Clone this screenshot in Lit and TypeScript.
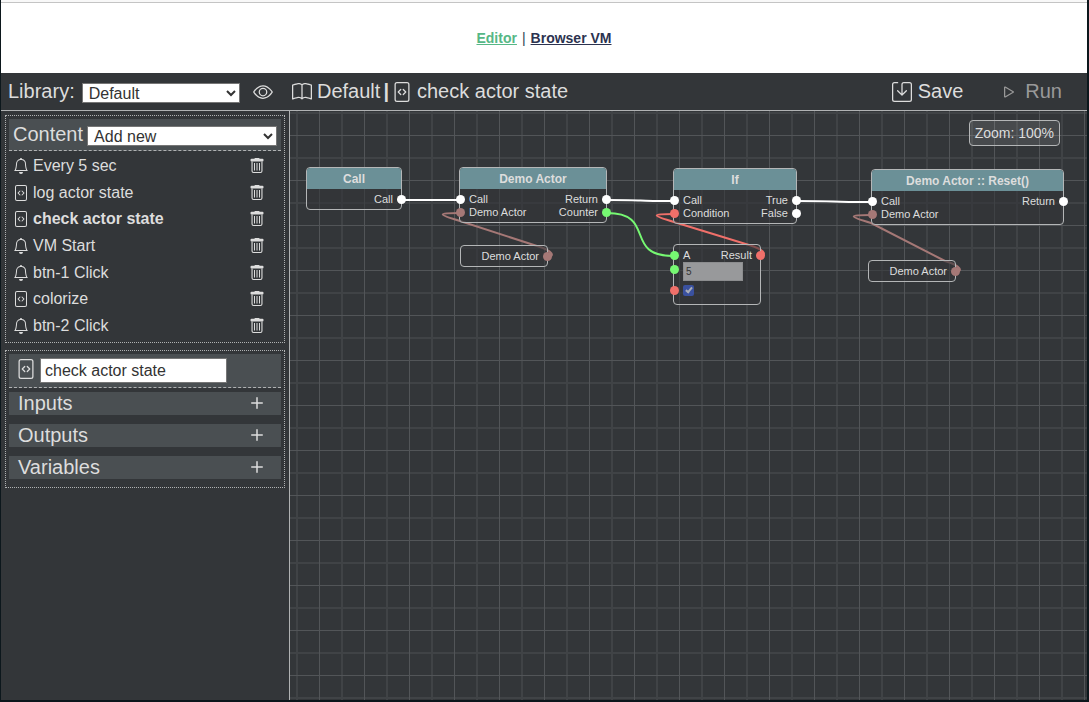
import { LitElement, html, css, svg } from "lit";
import { customElement, property, state } from "lit/decorators.js";
import { classMap } from "lit/directives/class-map.js";

const ICONS: Record<string, string[]> = {
  eye: [
    "M16 8s-3-5.5-8-5.5S0 8 0 8s3 5.5 8 5.5S16 8 16 8zM1.173 8a13.133 13.133 0 0 1 1.66-2.043C4.12 4.668 5.88 3.5 8 3.5c2.12 0 3.879 1.168 5.168 2.457A13.133 13.133 0 0 1 14.828 8c-.058.087-.122.183-.195.288-.335.48-.83 1.12-1.465 1.755C11.879 11.332 10.119 12.5 8 12.5c-2.12 0-3.879-1.168-5.168-2.457A13.134 13.134 0 0 1 1.172 8z",
    "M8 5.5a2.5 2.5 0 1 0 0 5 2.5 2.5 0 0 0 0-5zM4.5 8a3.5 3.5 0 1 1 7 0 3.5 3.5 0 0 1-7 0z",
  ],
  bell: [
    "M8 16a2 2 0 0 0 2-2H6a2 2 0 0 0 2 2zM8 1.918l-.797.161A4.002 4.002 0 0 0 4 6c0 .628-.134 2.197-.459 3.742-.16.767-.376 1.566-.663 2.258h10.244c-.287-.692-.502-1.49-.663-2.258C12.134 8.197 12 6.628 12 6a4.002 4.002 0 0 0-3.203-3.92L8 1.917zM14.22 12c.223.447.481.801.78 1H1c.299-.199.557-.553.78-1C2.68 10.2 3 6.88 3 6c0-2.42 1.72-4.44 4.005-4.901a1 1 0 1 1 1.99 0A5.002 5.002 0 0 1 13 6c0 .88.32 4.2 1.22 6z",
  ],
  code: [
    "M6.646 5.646a.5.5 0 1 1 .708.708L5.707 8l1.647 1.646a.5.5 0 0 1-.708.708l-2-2a.5.5 0 0 1 0-.708l2-2zm2.708 0a.5.5 0 1 0-.708.708L10.293 8 8.646 9.646a.5.5 0 0 0 .708.708l2-2a.5.5 0 0 0 0-.708l-2-2z",
    "M2 2a2 2 0 0 1 2-2h8a2 2 0 0 1 2 2v12a2 2 0 0 1-2 2H4a2 2 0 0 1-2-2V2zm10-1H4a1 1 0 0 0-1 1v12a1 1 0 0 0 1 1h8a1 1 0 0 0 1-1V2a1 1 0 0 0-1-1z",
  ],
  book: [
    "M1 2.828c.885-.37 2.154-.769 3.388-.893 1.33-.134 2.458.063 3.112.752v9.746c-.935-.53-2.12-.603-3.213-.493-1.18.12-2.37.461-3.287.811V2.828zm7.5-.141c.654-.689 1.782-.886 3.112-.752 1.234.124 2.503.523 3.388.893v9.923c-.918-.35-2.107-.692-3.287-.81-1.094-.111-2.278-.039-3.213.492V2.687zM8 1.783C7.015.936 5.587.81 4.287.94c-1.514.153-3.042.672-3.994 1.105A.5.5 0 0 0 0 2.5v11a.5.5 0 0 0 .707.455c.882-.4 2.303-.881 3.68-1.02 1.409-.142 2.59.087 3.223.877a.5.5 0 0 0 .78 0c.633-.79 1.814-1.019 3.222-.877 1.378.139 2.8.62 3.681 1.02A.5.5 0 0 0 16 13.5v-11a.5.5 0 0 0-.293-.455c-.952-.433-2.48-.952-3.994-1.105C10.413.809 8.985.936 8 1.783z",
  ],
  save: [
    "M2 1a1 1 0 0 0-1 1v12a1 1 0 0 0 1 1h12a1 1 0 0 0 1-1V2a1 1 0 0 0-1-1H9.5a1 1 0 0 0-1 1v7.293l2.646-2.647a.5.5 0 0 1 .708.708l-3.5 3.5a.5.5 0 0 1-.708 0l-3.5-3.5a.5.5 0 1 1 .708-.708L7.5 9.293V2a2 2 0 0 1 2-2H14a2 2 0 0 1 2 2v12a2 2 0 0 1-2 2H2a2 2 0 0 1-2-2V2a2 2 0 0 1 2-2h2.5a.5.5 0 0 1 0 1H2z",
  ],
  play: [
    "M10.804 8 5 4.633v6.734L10.804 8zm.792-.696a.802.802 0 0 1 0 1.392l-6.363 3.692C4.713 12.69 4 12.345 4 11.692V4.308c0-.653.713-.998 1.233-.696l6.363 3.692z",
  ],
  plus: [
    "M8 4a.5.5 0 0 1 .5.5v3h3a.5.5 0 0 1 0 1h-3v3a.5.5 0 0 1-1 0v-3h-3a.5.5 0 0 1 0-1h3v-3A.5.5 0 0 1 8 4z",
  ],
  trash: [
    "M5.5 .8V.5A.5.5 0 0 1 6 0h4a.5.5 0 0 1 .5.5V.8H13.500a1 1 0 0 1 1 1v.7a1 1 0 0 1-1 1H2.500a1 1 0 0 1-1-1V1.800a1 1 0 0 1 1-1z",
    "M2.500 3.500h11V13a2 2 0 0 1-2 2H4.500a2 2 0 0 1-2-2zM3.600 3.500V13a1 1 0 0 0 1 1h6.800a1 1 0 0 0 1-1V3.500z",
    "M5 5h1v7.500h-1zM7.500 5h1v7.500h-1zM10 5h1v7.500h-1z",
  ],
};

@customElement("ui-icon")
class UiIcon extends LitElement {
  @property() name = "code";
  static styles = css`
    :host {
      display: inline-flex;
      width: 1em;
      height: 1em;
      flex: none;
    }
    svg {
      width: 100%;
      height: 100%;
      fill: currentColor;
    }
  `;
  render() {
    return html`<svg viewBox="0 0 16 16" aria-hidden="true">
      ${ICONS[this.name].map((d) => svg`<path fill-rule="evenodd" d=${d}></path>`)}
    </svg>`;
  }
}

type Kind = "exec" | "actor" | "number" | "bool";
interface Port {
  kind: Kind;
  label?: string;
  control?: "text" | "check";
}
interface GraphNode {
  x: number;
  y: number;
  width: number;
  title?: string;
  inputs: Port[];
  outputs: Port[];
}

const NODES: GraphNode[] = [
  { x: 16, y: 56, width: 96, title: "Call", inputs: [], outputs: [{ kind: "exec", label: "Call" }] },
  {
    x: 169, y: 56, width: 148, title: "Demo Actor",
    inputs: [{ kind: "exec", label: "Call" }, { kind: "actor", label: "Demo Actor" }],
    outputs: [{ kind: "exec", label: "Return" }, { kind: "number", label: "Counter" }],
  },
  {
    x: 383, y: 57, width: 124, title: "If",
    inputs: [{ kind: "exec", label: "Call" }, { kind: "bool", label: "Condition" }],
    outputs: [{ kind: "exec", label: "True" }, { kind: "exec", label: "False" }],
  },
  {
    x: 581, y: 58, width: 193, title: "Demo Actor :: Reset()",
    inputs: [{ kind: "exec", label: "Call" }, { kind: "actor", label: "Demo Actor" }],
    outputs: [{ kind: "exec", label: "Return" }],
  },
  { x: 170, y: 134, width: 88, inputs: [], outputs: [{ kind: "actor", label: "Demo Actor" }] },
  { x: 578, y: 149, width: 88, inputs: [], outputs: [{ kind: "actor", label: "Demo Actor" }] },
  {
    x: 383, y: 133, width: 88,
    inputs: [
      { kind: "number", label: "A" },
      { kind: "number", control: "text" },
      { kind: "bool", control: "check" },
    ],
    outputs: [{ kind: "bool", label: "Result" }],
  },
];

interface Wire {
  kind: Kind;
  from: [number, number];
  to: [number, number];
}

const WIRES: Wire[] = [
  { kind: "exec", from: [111, 89], to: [170, 89] },
  { kind: "exec", from: [317, 89], to: [384, 90] },
  { kind: "exec", from: [506, 90], to: [581, 91] },
  { kind: "number", from: [317, 102], to: [383, 145] },
  { kind: "actor", from: [257, 146], to: [170, 102] },
  { kind: "bool", from: [469, 145], to: [384, 103] },
  { kind: "actor", from: [665, 161], to: [581, 104] },
];

/* Forward wires are plain curves; backward ones loop around both ends. */
function wirePath({ from: [sx, sy], to: [ex, ey] }: Wire): string {
  if (ex < sx) {
    return `M${sx} ${sy}C${sx + 8} ${sy} ${sx + 7} ${sy - 6} ${sx - 10} ${sy - 11}L${ex} ${ey + 8}C${ex - 24} ${ey + 1} ${ex - 22} ${ey} ${ex} ${ey}`;
  }
  return `M${sx} ${sy}C${sx + 50} ${sy} ${ex - 50} ${ey} ${ex} ${ey}`;
}

@customElement("graph-canvas")
class GraphCanvas extends LitElement {
  static styles = css`
    :host {
      display: block;
      position: relative;
      overflow: hidden;
      font-size: 11px;
      background-color: #333639;
      background-image: linear-gradient(90deg, #525558 1px, transparent 1px),
        linear-gradient(#525558 1px, transparent 1px),
        linear-gradient(90deg, #404346 2px, transparent 2px),
        linear-gradient(#404346 2px, transparent 2px);
      background-size: 45px 45px;
      background-position: 29px 0, 0 24px, 6px 0, 0 1px;
    }
    .wires {
      position: absolute;
      inset: 0;
      width: 100%;
      height: 100%;
      fill: none;
      stroke-width: 2;
    }
    .wire.exec { stroke: #fff; }
    .wire.actor { stroke: #a57876; }
    .wire.number { stroke: #76f872; }
    .wire.bool { stroke: #f0706a; }
    .node {
      position: absolute;
      box-sizing: border-box;
      border: 1px solid #b4b6b7;
      border-radius: 4px;
      background: rgba(51, 54, 57, 0.6);
    }
    .title {
      margin: 0;
      padding-top: 1px;
      border-radius: 3px 3px 0 0;
      background: #6b9097;
      font-size: 12px;
      line-height: 20px;
      text-align: center;
    }
    .ports {
      display: flex;
      justify-content: space-between;
      padding: 4px 0 3px;
    }
    .side {
      display: flex;
      flex-direction: column;
      min-width: 0;
      margin-left: -4px;
    }
    .side.out {
      flex: none;
      margin: 0 -5px 0 0;
    }
    .port {
      display: flex;
      align-items: center;
      gap: 4px;
      line-height: 13px;
    }
    .out .port {
      flex-direction: row-reverse;
    }
    .label {
      padding-bottom: 1px;
      line-height: 12px;
      white-space: nowrap;
    }
    .pin {
      width: 9px;
      height: 9px;
      border-radius: 50%;
      flex: none;
    }
    .pin.exec { background: #fff; }
    .pin.actor { background: #a57876; }
    .pin.number { background: #76f872; }
    .pin.bool { background: #f0706a; }
    .port.text,
    .port.check-row {
      align-items: flex-start;
    }
    .port.text .pin {
      margin-top: 3px;
    }
    .port.check-row .pin {
      margin-top: 1px;
    }
    .value {
      box-sizing: border-box;
      width: 60px;
      height: 19px;
      margin-bottom: 4px;
      padding: 0 2px;
      border: 1px solid #8c8d8f;
      background: #98999b;
      color: #333;
      font: 10px "Liberation Sans", Arial, sans-serif;
      flex: none;
    }
    .check {
      appearance: none;
      display: grid;
      width: 11px;
      height: 11px;
      margin: 0 0 5px;
      border-radius: 2px;
      background: #3a519f;
      flex: none;
    }
    .check:checked::before {
      content: "";
      width: 2px;
      height: 5px;
      margin: 1px 4px;
      border: solid #a9adb8;
      border-width: 0 2px 2px 0;
      rotate: 40deg;
    }
    .zoom {
      position: absolute;
      top: 9px;
      right: 27px;
      padding: 0 5px;
      border: 1px solid #b4b6b7;
      border-radius: 4px;
      background: rgba(255, 255, 255, 0.1);
      font-size: 14px;
      line-height: 24px;
    }
  `;

  private port(p: Port) {
    return html`<div class=${classMap({ port: true, text: p.control === "text", "check-row": p.control === "check" })}>
      <span class="pin ${p.kind}"></span>
      ${p.label ? html`<span class="label">${p.label}</span>` : ""}
      ${p.control === "text" ? html`<input class="value" type="text" aria-label="B" .value=${"5"} />` : ""}
      ${p.control === "check" ? html`<input class="check" type="checkbox" aria-label="Enabled" checked />` : ""}
    </div>`;
  }

  render() {
    return html`
      <svg class="wires" aria-hidden="true">
        ${WIRES.map((w) => svg`<path class="wire ${w.kind}" d=${wirePath(w)}></path>`)}
      </svg>
      ${NODES.map(
        (n) => html`<section class="node" style="left:${n.x}px;top:${n.y}px;width:${n.width}px">
          ${n.title ? html`<h3 class="title">${n.title}</h3>` : ""}
          <div class="ports">
            <div class="side">${n.inputs.map((p) => this.port(p))}</div>
            <div class="side out">${n.outputs.map((p) => this.port(p))}</div>
          </div>
        </section>`
      )}
      <div class="zoom">Zoom: 100%</div>
    `;
  }
}

@customElement("app-root")
class AppRoot extends LitElement {
  @state() private selected = "check actor state";

  private items = [
    { icon: "bell", name: "Every 5 sec" },
    { icon: "code", name: "log actor state" },
    { icon: "code", name: "check actor state" },
    { icon: "bell", name: "VM Start" },
    { icon: "bell", name: "btn-1 Click" },
    { icon: "code", name: "colorize" },
    { icon: "bell", name: "btn-2 Click" },
  ];

  static styles = css`
    :host {
      display: flex;
      flex-direction: column;
      box-sizing: border-box;
      min-height: 100vh;
      border: solid #0c171c;
      border-width: 0 2px 2px 1px;
      background: #333639;
      color: #ddd;
      font: 16px "Liberation Sans", Arial, sans-serif;
    }
    button {
      display: inline-flex;
      align-items: center;
      padding: 0;
      border: 0;
      background: none;
      color: inherit;
      font: inherit;
      cursor: pointer;
    }
    select {
      box-sizing: border-box;
      height: 20px;
      padding: 0 0 2px 2px;
      border: 1px solid #767676;
      border-radius: 0;
      background-color: #fff;
      color: #333;
      font: 16px "Liberation Sans", Arial, sans-serif;
    }
    .nav {
      border-top: 2px solid #f8f8f8;
      background: #fff;
      color: #2c3e50;
    }
    .links {
      display: flex;
      justify-content: center;
      gap: 5px;
      border-top: 1px solid #c4c4c4;
      font-size: 14px;
      line-height: 70px;
    }
    .link {
      color: #2c3350;
      font-weight: bold;
    }
    .link.active {
      color: #56b786;
    }
    .toolbar {
      display: flex;
      align-items: center;
      height: 37px;
      border-bottom: 1px solid #b0b2b3;
      font-size: 20px;
    }
    .library {
      display: flex;
      align-items: center;
      box-sizing: border-box;
      width: 289px;
      padding-left: 7px;
      gap: 7px;
      flex: none;
    }
    .library select {
      width: 158px;
      margin-top: 2px;
    }
    .eye {
      margin-left: 6px;
    }
    .crumbs {
      display: flex;
      align-items: center;
      flex: 1;
      padding-left: 2px;
      gap: 5px;
    }
    .crumbs .bar {
      font-weight: bold;
      margin: 0 -2px;
    }
    .actions {
      display: flex;
      gap: 36px;
      padding-right: 25px;
    }
    .actions button {
      gap: 6px;
    }
    .actions button:disabled {
      color: #999;
    }
    .body {
      display: grid;
      grid-template-columns: 289px 1fr;
      flex: 1;
    }
    .sidebar {
      padding: 4px;
      border-right: 1px solid #b0b2b3;
    }
    .panel {
      border: 1px dotted #b0b2b3;
      padding: 3px;
    }
    .panel + .panel {
      margin-top: 7px;
      padding-bottom: 8px;
    }
    .head {
      display: flex;
      align-items: center;
      gap: 4px;
      height: 31px;
      padding: 0 4px;
      border-bottom: 1px dashed #b0b2b3;
      background: #4a4f52;
      font-size: 20px;
    }
    .head select {
      flex: 1;
      margin-top: 2px;
    }
    .list {
      display: grid;
      grid-auto-rows: 1fr;
      height: 186px;
      margin: 2px 0 0;
      padding: 0;
      list-style: none;
    }
    .item {
      display: flex;
      align-items: center;
      justify-content: space-between;
      padding: 0 16px 0 4px;
    }
    .pick {
      gap: 4px;
    }
    .item.selected .pick {
      font-weight: bold;
    }
    .head.detail {
      height: 33px;
      padding: 0 7px;
    }
    .detail ui-icon {
      margin-bottom: 4px;
    }
    .name {
      box-sizing: border-box;
      width: 187px;
      height: 25px;
      padding: 0 4px;
      border: 1px solid #767676;
      background: #fff;
      color: #333;
      font: 16px "Liberation Sans", Arial, sans-serif;
    }
    .groups {
      display: flex;
      flex-direction: column;
      gap: 9px;
      margin-top: 4px;
    }
    .group {
      display: flex;
      align-items: center;
      justify-content: space-between;
      height: 23px;
      padding: 0 12px 0 9px;
      background: #4a4f52;
    }
    .group h2 {
      margin: 0;
      font-size: 20px;
      font-weight: normal;
    }
    .group button {
      padding-bottom: 2px;
      font-size: 24px;
    }
  `;

  render() {
    return html`
      <nav class="nav">
        <div class="links">
          <a class="link active" href="#editor">Editor</a>
          <span>|</span>
          <a class="link" href="#vm">Browser VM</a>
        </div>
      </nav>
      <header class="toolbar">
        <div class="library">
          <label for="library">Library:</label>
          <select id="library"><option>Default</option></select>
          <button class="eye" aria-label="Show library"><ui-icon name="eye"></ui-icon></button>
        </div>
        <div class="crumbs">
          <ui-icon name="book"></ui-icon><span>Default</span>
          <span class="bar">|</span>
          <ui-icon name="code"></ui-icon><span>${this.selected}</span>
        </div>
        <div class="actions">
          <button><ui-icon name="save"></ui-icon>Save</button>
          <button disabled><ui-icon name="play"></ui-icon>Run</button>
        </div>
      </header>
      <main class="body">
        <aside class="sidebar">
          <section class="panel">
            <div class="head">
              <label for="add">Content</label>
              <select id="add"><option>Add new</option></select>
            </div>
            <ul class="list">
              ${this.items.map(
                (i) => html`<li class=${classMap({ item: true, selected: i.name === this.selected })}>
                  <button class="pick" @click=${() => (this.selected = i.name)}>
                    <ui-icon name=${i.icon}></ui-icon>${i.name}
                  </button>
                  <button aria-label="Delete ${i.name}"><ui-icon name="trash"></ui-icon></button>
                </li>`
              )}
            </ul>
          </section>
          <section class="panel">
            <div class="head detail">
              <ui-icon name="code"></ui-icon>
              <input class="name" type="text" aria-label="Name" .value=${this.selected} />
            </div>
            <div class="groups">
              ${["Inputs", "Outputs", "Variables"].map(
                (g) => html`<div class="group">
                  <h2>${g}</h2>
                  <button aria-label="Add to ${g}"><ui-icon name="plus"></ui-icon></button>
                </div>`
              )}
            </div>
          </section>
        </aside>
        <graph-canvas></graph-canvas>
      </main>
    `;
  }
}
